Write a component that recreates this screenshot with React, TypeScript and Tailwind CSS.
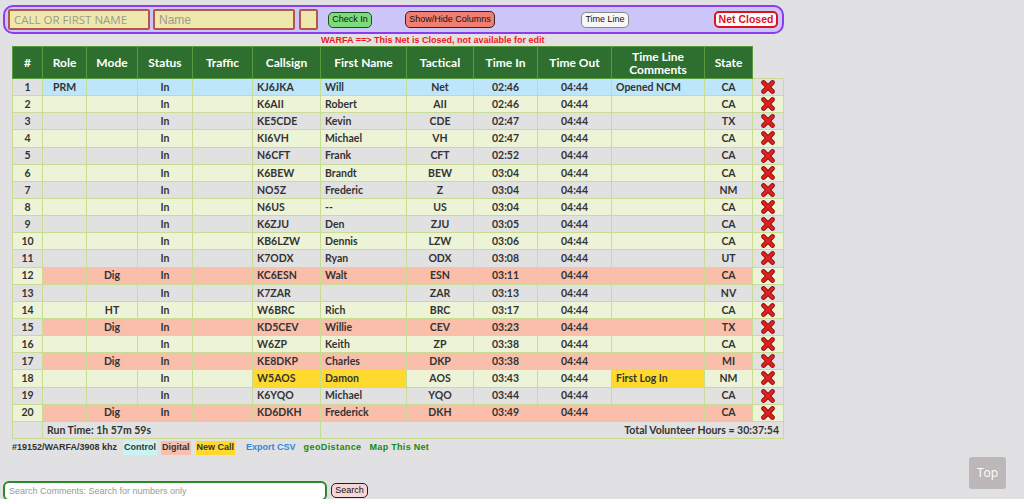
import React from 'react';

type Row = {
  n: number;
  role?: string;
  mode?: string;
  call: string;
  name: string;
  tac: string;
  tin: string;
  tlc?: string;
  state: string;
  kind?: 'ctrl' | 'dig' | 'new';
};

const rows: Row[] = [
  { n: 1, role: 'PRM', call: 'KJ6JKA', name: 'Will', tac: 'Net', tin: '02:46', tlc: 'Opened NCM', state: 'CA', kind: 'ctrl' },
  { n: 2, call: 'K6AII', name: 'Robert', tac: 'AII', tin: '02:46', state: 'CA' },
  { n: 3, call: 'KE5CDE', name: 'Kevin', tac: 'CDE', tin: '02:47', state: 'TX' },
  { n: 4, call: 'KI6VH', name: 'Michael', tac: 'VH', tin: '02:47', state: 'CA' },
  { n: 5, call: 'N6CFT', name: 'Frank', tac: 'CFT', tin: '02:52', state: 'CA' },
  { n: 6, call: 'K6BEW', name: 'Brandt', tac: 'BEW', tin: '03:04', state: 'CA' },
  { n: 7, call: 'NO5Z', name: 'Frederic', tac: 'Z', tin: '03:04', state: 'NM' },
  { n: 8, call: 'N6US', name: '--', tac: 'US', tin: '03:04', state: 'CA' },
  { n: 9, call: 'K6ZJU', name: 'Den', tac: 'ZJU', tin: '03:05', state: 'CA' },
  { n: 10, call: 'KB6LZW', name: 'Dennis', tac: 'LZW', tin: '03:06', state: 'CA' },
  { n: 11, call: 'K7ODX', name: 'Ryan', tac: 'ODX', tin: '03:08', state: 'UT' },
  { n: 12, mode: 'Dig', call: 'KC6ESN', name: 'Walt', tac: 'ESN', tin: '03:11', state: 'CA', kind: 'dig' },
  { n: 13, call: 'K7ZAR', name: '', tac: 'ZAR', tin: '03:13', state: 'NV' },
  { n: 14, mode: 'HT', call: 'W6BRC', name: 'Rich', tac: 'BRC', tin: '03:17', state: 'CA' },
  { n: 15, mode: 'Dig', call: 'KD5CEV', name: 'Willie', tac: 'CEV', tin: '03:23', state: 'TX', kind: 'dig' },
  { n: 16, call: 'W6ZP', name: 'Keith', tac: 'ZP', tin: '03:38', state: 'CA' },
  { n: 17, mode: 'Dig', call: 'KE8DKP', name: 'Charles', tac: 'DKP', tin: '03:38', state: 'MI', kind: 'dig' },
  { n: 18, call: 'W5AOS', name: 'Damon', tac: 'AOS', tin: '03:43', tlc: 'First Log In', state: 'NM', kind: 'new' },
  { n: 19, call: 'K6YQO', name: 'Michael', tac: 'YQO', tin: '03:44', state: 'CA' },
  { n: 20, mode: 'Dig', call: 'KD6DKH', name: 'Frederick', tac: 'DKH', tin: '03:49', state: 'CA', kind: 'dig' },
];

const headers = [
  ['#', 'w-[30px]'],
  ['Role', 'w-[44px]'],
  ['Mode', 'w-[51px]'],
  ['Status', 'w-[55px]'],
  ['Traffic', 'w-[60px]'],
  ['Callsign', 'w-[68px]'],
  ['First Name', 'w-[86px]'],
  ['Tactical', 'w-[67px]'],
  ['Time In', 'w-[64px]'],
  ['Time Out', 'w-[74px]'],
  ['Time Line Comments', 'w-[93px]'],
  ['State', 'w-[48px]'],
];

function DeleteX() {
  return (
    <svg width="14" height="14" viewBox="0 0 14 14" className="mx-auto block">
      <g stroke="#8c0a0a" strokeWidth="4.6" strokeLinecap="round">
        <line x1="2.5" y1="2.5" x2="11.5" y2="11.5" />
        <line x1="11.5" y1="2.5" x2="2.5" y2="11.5" />
      </g>
      <g stroke="#e0221f" strokeWidth="3" strokeLinecap="round">
        <line x1="2.5" y1="2.5" x2="11.5" y2="11.5" />
        <line x1="11.5" y1="2.5" x2="2.5" y2="11.5" />
      </g>
    </svg>
  );
}

function NetRow({ r }: { r: Row }) {
  const stripe = r.n % 2 === 0 ? 'bg-[#ecf3d6]' : 'bg-[#e1e1e1]';
  const body =
    r.kind === 'ctrl' ? 'bg-[#bde6fa]' : r.kind === 'dig' ? 'bg-[#f9bfab]' : stripe;
  const hot = r.kind === 'new' ? 'bg-[#ffda2e]' : body;
  const td = 'border border-[#c8dc94] px-1';
  return (
    <tr className="h-[17.15px]">
      <td className={`${td} ${stripe} text-center`}>{r.n}</td>
      <td className={`${td} ${body} text-center`}>{r.role}</td>
      <td className={`${td} ${body} text-center`}>{r.mode}</td>
      <td className={`${td} ${body} text-center`}>In</td>
      <td className={`${td} ${body}`}></td>
      <td className={`${td} ${hot}`}>{r.call}</td>
      <td className={`${td} ${hot}`}>{r.name}</td>
      <td className={`${td} ${body} text-center`}>{r.tac}</td>
      <td className={`${td} ${body} text-center`}>{r.tin}</td>
      <td className={`${td} ${body} text-center`}>04:44</td>
      <td className={`${td} ${hot}`}>{r.tlc}</td>
      <td className={`${td} ${body} text-center`}>{r.state}</td>
      <td className={`${td} ${stripe}`}>
        <DeleteX />
      </td>
    </tr>
  );
}

export default function App() {
  return (
    <div className="relative min-h-[499px] bg-[#e1e1e3] overflow-hidden font-['Liberation_Sans',Arial,sans-serif]">
      {/* Check-in bar */}
      <div className="ml-[3px] mt-[5px] w-[781px] h-[29px] rounded-[10px] border-2 border-[#8a3df0] bg-[#cbc6f7] flex items-center pl-[3px]">
        <input
          placeholder="CALL OR FIRST NAME"
          className="w-[142px] h-[21px] bg-[#efe8ad] border-2 border-[#b5564c] rounded-[2px] px-1 text-[11.5px] font-['Open_Sans',sans-serif] placeholder:text-[#9b9a8c] outline-none"
        />
        <input
          placeholder="Name"
          className="ml-[3px] w-[142px] h-[21px] bg-[#efe8ad] border-2 border-[#b5564c] rounded-[2px] px-1 text-[12px] placeholder:text-[#9b9a8c] outline-none"
        />
        <div className="ml-[4px] w-[19px] h-[21px] bg-[#efe8ad] border-2 border-[#b5564c] rounded-[2px]" />
        <button className="ml-[10px] w-[44px] h-[16px] whitespace-nowrap bg-[#7ddc7a] border border-[#1f4f1f] rounded-[5px] text-[9px] leading-none text-[#111]">
          Check In
        </button>
        <button className="ml-[33px] w-[90px] h-[17px] whitespace-nowrap bg-[#f07f72] border border-[#3a2020] rounded-[5px] text-[9px] leading-none text-[#111]">
          Show/Hide Columns
        </button>
        <button className="ml-[86px] w-[48px] h-[16px] whitespace-nowrap bg-[#f7f7f7] border border-[#888] rounded-[5px] text-[9px] leading-none text-[#111]">
          Time Line
        </button>
        <button className="ml-[85px] w-[64px] h-[17px] whitespace-nowrap bg-white border-2 border-[#e0101c] rounded-[5px] text-[10.5px] leading-none font-bold text-[#e0101c]">
          Net Closed
        </button>
      </div>

      <div className="ml-[321px] mt-[1px] h-[11px] text-[9px] leading-[11px] font-bold text-[#f01818]">
        WARFA ==&gt; This Net is Closed, not available for edit
      </div>

      {/* Net table */}
      <table className="ml-[12px] w-[771px] table-fixed border-collapse text-[10.5px] font-['Lato',sans-serif] font-bold text-[#333] leading-none">
        <thead>
          <tr className="h-[32px]">
            {headers.map(([label, w]) => (
              <th
                key={label}
                className={`${w} bg-[#2e6f2f] border border-[#5a9a3e] text-white text-[12px] font-bold leading-[13px] px-1`}
              >
                {label}
              </th>
            ))}
            <th className="w-[31px] border-0 bg-transparent"></th>
          </tr>
        </thead>
        <tbody>
          {rows.map((r) => (
            <NetRow key={r.n} r={r} />
          ))}
          <tr className="h-[17px] bg-[#e1e1e1]">
            <td className="border border-[#c8dc94]"></td>
            <td colSpan={5} className="border border-[#c8dc94] px-1">
              Run Time: 1h 57m 59s
            </td>
            <td colSpan={7} className="border border-[#c8dc94] px-1 text-right">
              Total Volunteer Hours = 30:37:54
            </td>
          </tr>
        </tbody>
      </table>

      {/* Legend & links */}
      <div className="ml-[12px] mt-[2px] flex items-center text-[9px] font-bold text-[#333] h-[14px]">
        <span>#19152/WARFA/3908 khz</span>
        <span className="ml-[6px] bg-[#c8f4f4] px-[1px]">Control</span>
        <span className="ml-[4px] bg-[#f7bfae] px-[1px]">Digital</span>
        <span className="ml-[5px] bg-[#ffd92b] px-[1px]">New Call</span>
        <span className="ml-[11px] text-[#2a8ad6]">Export CSV</span>
        <span className="ml-[8px] text-[#138a13] tracking-[0.4px]">geoDistance</span>
        <span className="ml-[8px] text-[#138a13] tracking-[0.3px]">Map This Net</span>
      </div>

      {/* Search */}
      <div className="ml-[3px] mt-[26px] flex items-center">
        <input
          placeholder="Search Comments: Search for numbers only"
          className="w-[324px] h-[20px] bg-white border-2 border-[#2a8a2a] rounded-[6px] px-[4px] text-[9px] placeholder:text-[#999] outline-none"
        />
        <button className="ml-[4px] w-[37px] h-[15px] bg-[#f7d6d6] border border-[#222] rounded-[5px] text-[9px] leading-none text-[#111]">
          Search
        </button>
      </div>

      <button className="absolute left-[969px] top-[457px] w-[37px] h-[32px] bg-[#bcb8b9] rounded-[3px] text-white text-[12px] font-['Open_Sans',sans-serif]">
        Top
      </button>
    </div>
  );
}
